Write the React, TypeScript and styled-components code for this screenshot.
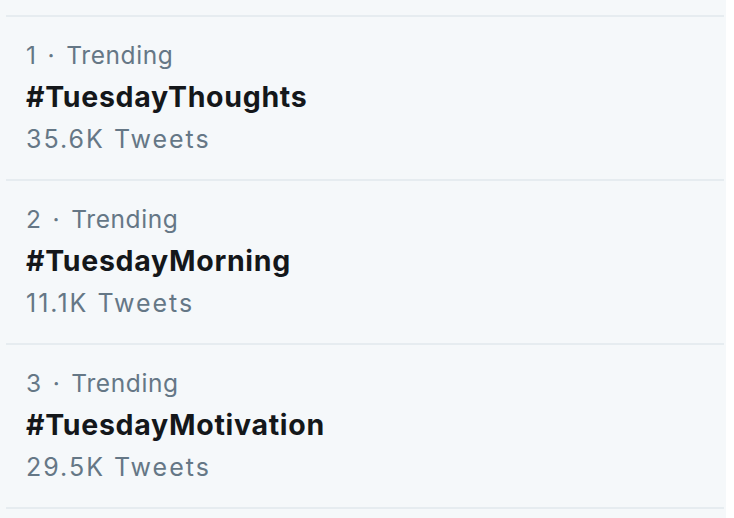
import React from "react";
import styled, { createGlobalStyle } from "styled-components";

const GlobalStyle = createGlobalStyle`
    html, body {
        margin: 0;
        padding: 0;
        background: #ffffff;
    }
    body {
        font-family: Inter, "Noto Sans", "Liberation Sans", sans-serif;
        -webkit-font-smoothing: antialiased;
    }
`;

const Panel = styled.div`
    width: 718px;
    padding: 0 2px 0 6px;
    background-color: #f5f8fa;
    min-height: 518px;
`;

const TopEdge = styled.div`
    height: 15px;
    border-bottom: 2px solid #e6ecf0;
`;

const TrendList = styled.ul`
    list-style: none;
    margin: 0;
    padding: 0;
`;

const TrendItem = styled.li`
    display: flex;
    flex-direction: column;
    padding: 17px 20px 19px;
    border-bottom: 2px solid #e6ecf0;
`;

const Context = styled.span`
    font-size: 24.5px;
    color: #657786;
    line-height: 42px;
    letter-spacing: 0.6px;
    word-spacing: 3.5px;
    white-space: nowrap;
`;

const Hashtag = styled.span`
    font-size: 28.5px;
    font-weight: 700;
    color: #14171a;
    line-height: 42px;
    letter-spacing: 0.7px;
    white-space: nowrap;
`;

const Count = styled.span`
    font-size: 25px;
    color: #657786;
    line-height: 42px;
    letter-spacing: 2px;
    white-space: nowrap;
`;

interface Trend {
    rank: number;
    tag: string;
    count: string;
}

const trends: Trend[] = [
    { rank: 1, tag: "#TuesdayThoughts", count: "35.6K" },
    { rank: 2, tag: "#TuesdayMorning", count: "11.1K" },
    { rank: 3, tag: "#TuesdayMotivation", count: "29.5K" },
];

const App: React.FC = () => {
    return (
        <>
            <GlobalStyle />
            <Panel>
                <TopEdge />
                <TrendList>
                    {trends.map((trend) => (
                        <TrendItem key={trend.rank}>
                            <Context>{trend.rank} · Trending</Context>
                            <Hashtag>{trend.tag}</Hashtag>
                            <Count>{trend.count} Tweets</Count>
                        </TrendItem>
                    ))}
                </TrendList>
            </Panel>
        </>
    );
};

export default App;
